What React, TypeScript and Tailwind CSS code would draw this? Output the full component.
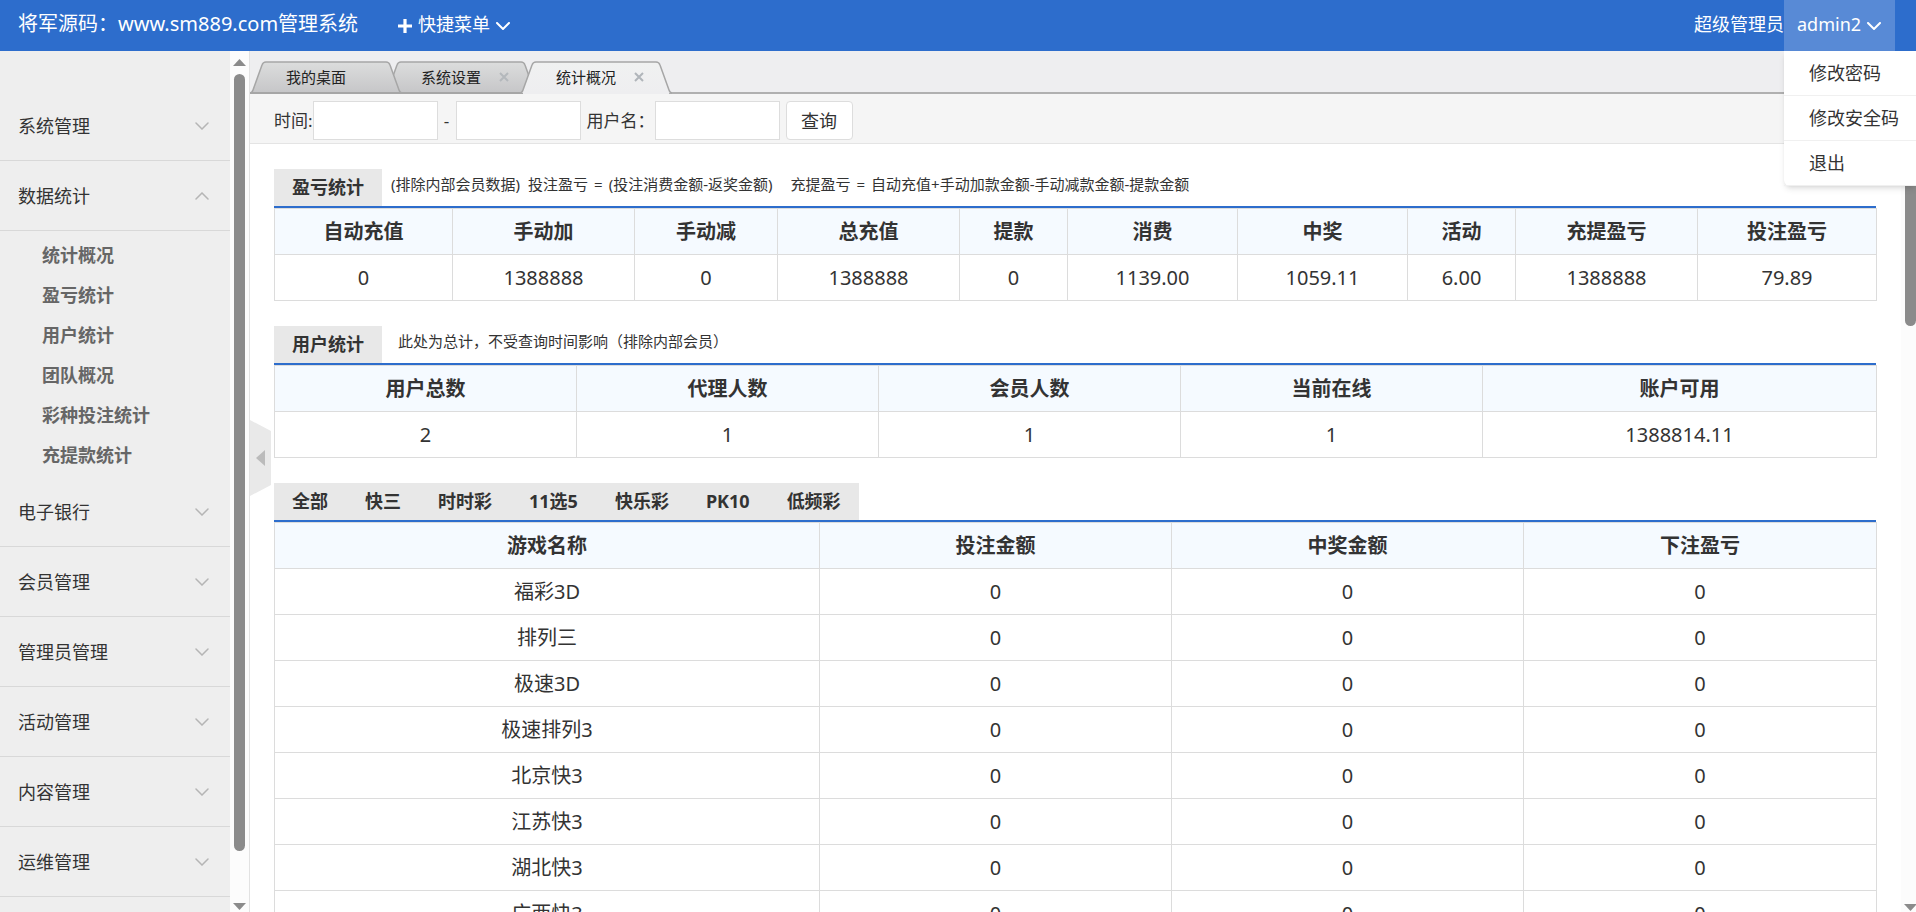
import { useState } from 'react';

const menus = [
  { title: '系统管理', children: [] },
  { title: '数据统计', children: ['统计概况', '盈亏统计', '用户统计', '团队概况', '彩种投注统计', '充提款统计'] },
  { title: '电子银行', children: [] },
  { title: '会员管理', children: [] },
  { title: '管理员管理', children: [] },
  { title: '活动管理', children: [] },
  { title: '内容管理', children: [] },
  { title: '运维管理', children: [] },
];

const tabs = [
  { title: '我的桌面', closable: false, layer: 'z-[1]' },
  { title: '系统设置', closable: true, layer: '' },
  { title: '统计概况', closable: true, layer: 'z-[2]' },
];

const profit = [
  { name: '自动充值', value: '0', width: 'w-[178px]' },
  { name: '手动加', value: '1388888', width: 'w-[182px]' },
  { name: '手动减', value: '0', width: 'w-[143px]' },
  { name: '总充值', value: '1388888', width: 'w-[182px]' },
  { name: '提款', value: '0', width: 'w-[108px]' },
  { name: '消费', value: '1139.00', width: 'w-[170px]' },
  { name: '中奖', value: '1059.11', width: 'w-[170px]' },
  { name: '活动', value: '6.00', width: 'w-[108px]' },
  { name: '充提盈亏', value: '1388888', width: 'w-[182px]' },
  { name: '投注盈亏', value: '79.89', width: 'w-[179px]' },
];

const users = [
  { name: '用户总数', value: '2', width: 'w-[302px]' },
  { name: '代理人数', value: '1', width: 'w-[302px]' },
  { name: '会员人数', value: '1', width: 'w-[302px]' },
  { name: '当前在线', value: '1', width: 'w-[302px]' },
  { name: '账户可用', value: '1388814.11', width: 'w-[394px]' },
];

const gameColumns = [
  { name: '游戏名称', width: 'w-[545px]' },
  { name: '投注金额', width: 'w-[352px]' },
  { name: '中奖金额', width: 'w-[352px]' },
  { name: '下注盈亏', width: 'w-[353px]' },
];

const categories = ['全部', '快三', '时时彩', '11选5', '快乐彩', 'PK10', '低频彩'];
const games = ['福彩3D', '排列三', '极速3D', '极速排列3', '北京快3', '江苏快3', '湖北快3', '广西快3'];

const Chevron = ({ up = false, className = '' }: { up?: boolean; className?: string }) => (
  <svg width="14" height="8" viewBox="0 0 14 8" fill="none" stroke="currentColor" className={className}>
    <path d={up ? 'M1 7l6-6 6 6' : 'M1 1l6 6 6-6'} strokeLinecap="round" />
  </svg>
);

const Arrow = ({ up = false }: { up?: boolean }) => (
  <svg width="13" height="7" viewBox="0 0 13 7" className="shrink-0 fill-[#8b8b8b]">
    <path d={up ? 'M0 7l6.5-7L13 7z' : 'M0 0l6.5 7L13 0z'} />
  </svg>
);

const TabShape = ({ active }: { active: boolean }) => (
  <svg
    width="152"
    height="34"
    viewBox="0 0 152 34"
    fill="none"
    className="absolute left-0 top-0"
  >
    <defs>
      <linearGradient id="tab-on" x1="0" y1="0" x2="0" y2="1">
        <stop offset="0" stopColor="#f0f1f1" />
        <stop offset="1" stopColor="#eeeef0" />
      </linearGradient>
      <linearGradient id="tab-off" x1="0" y1="0" x2="0" y2="1">
        <stop offset="0" stopColor="#dcdddd" />
        <stop offset="1" stopColor="#c6c6c8" />
      </linearGradient>
    </defs>
    <path
      d="M0 32Q2 32 3 29L12 4Q13 1 16 1H136Q139 1 140 4L149 29Q150 32 152 32"
      fill={active ? 'url(#tab-on)' : 'url(#tab-off)'}
      stroke="#a6a6a6"
      strokeWidth="1.5"
    />
    {!active && <path d="M0 32H152" stroke="#a6a6a6" strokeWidth="2" />}
    {active && <path d="M3 32H149" stroke="#eeeef0" strokeWidth="2" />}
  </svg>
);

const SummaryTable = ({ data }: { data: { name: string; value: string; width: string }[] }) => (
  <table className="w-full table-fixed border-collapse text-center text-xl leading-[45px]">
    <thead className="bg-[#f5faff]">
      <tr>
        {data.map((item) => (
          <th key={item.name} className={`border border-[#dcdcdc] p-0 font-bold ${item.width}`}>{item.name}</th>
        ))}
      </tr>
    </thead>
    <tbody>
      <tr>
        {data.map((item) => (
          <td key={item.name} className="border border-[#dcdcdc] p-0">{item.value}</td>
        ))}
      </tr>
    </tbody>
  </table>
);

const Header = () => {
  const [open, setOpen] = useState(true);

  return (
    <header className="relative z-20 flex h-[51px] shrink-0 items-stretch bg-[#2d6dcc] pl-[18px] text-lg text-white">
      <h1 className="flex items-center pb-1 text-xl">将军源码：www.sm889.com管理系统</h1>
      <button className="ml-10 flex items-center gap-1.5 pb-1">
        <svg width="14" height="14" viewBox="0 0 14 14" className="mt-1 fill-white">
          <path d="M5.4 0h3.2v5.4H14v3.2H8.6V14H5.4V8.6H0V5.4h5.4z" />
        </svg>
        快捷菜单
        <Chevron className="mt-1 stroke-2" />
      </button>

      <div className="ml-auto flex items-stretch">
        <span className="flex items-center pb-1">超级管理员</span>
        <div className="relative mr-[21px] flex">
          <button
            onClick={() => setOpen(!open)}
            className="flex w-[111px] items-center gap-1.5 bg-[#588ad6] pb-1 pl-[13px]"
          >
            admin2
            <Chevron className="mt-1 stroke-2" />
          </button>
          {open && (
            <ul className="absolute left-0 top-full w-[132px] rounded-bl-md bg-white text-[#333] shadow-md">
              {['修改密码', '修改安全码', '退出'].map((item) => (
                <li key={item} className="border-b border-[#f0f0f0]">
                  <a href="#" className="block h-11 whitespace-nowrap pl-[25px] leading-[44px]">{item}</a>
                </li>
              ))}
            </ul>
          )}
        </div>
      </div>
    </header>
  );
};

const Sidebar = () => (
  <aside className="flex w-[250px] shrink-0 border-r border-[#e2e2e2]">
    <nav className="flex-1 overflow-hidden bg-[#eee] pt-10 text-lg text-[#333]">
      {menus.map((menu) => (
        <div key={menu.title}>
          <button className="flex h-[70px] w-full items-center justify-between border-b border-[#d8d8d8] pl-[18px] pr-[21px]">
            {menu.title}
            <Chevron up={menu.children.length > 0} className="text-[#b5b5b5] stroke-[1.5]" />
          </button>
          {menu.children.length > 0 && (
            <ul className="pt-1 pb-0.5 font-bold text-[#666]">
              {menu.children.map((child) => (
                <li key={child}>
                  <a href="#" className="block h-10 pl-[42px] leading-10">{child}</a>
                </li>
              ))}
            </ul>
          )}
        </div>
      ))}
    </nav>
    <div className="flex w-[19px] shrink-0 flex-col items-center justify-between bg-[#fcfcfc] pt-2 pb-0.5">
      <Arrow up />
      <div className="mt-2 mb-[52px] w-[11px] flex-1 rounded-full bg-[#8b8b8b]" />
      <Arrow />
    </div>
  </aside>
);

const TabBar = () => (
  <div className="h-[43px] shrink-0 border-b-2 border-[#b0b0b0] bg-[#eeeef0] pt-2.5 text-[15px] text-[#222]">
    <div className="flex">
      {tabs.map((tab, i) => {
        const active = i === tabs.length - 1;
        return (
          <div key={tab.title} className={`relative -mr-[17px] h-[34px] w-[152px] ${tab.layer}`}>
            <TabShape active={active} />
            <div className="relative flex h-8 items-center gap-[18px] pl-9">
              {tab.title}
              {tab.closable && (
                <button aria-label="关闭">
                  <svg width="10" height="10" viewBox="0 0 10 10" stroke={active ? '#b0b5ba' : '#b4b8bc'} strokeWidth="2">
                    <path d="M1 1l8 8M9 1L1 9" />
                  </svg>
                </button>
              )}
            </div>
          </div>
        );
      })}
    </div>
  </div>
);

const Filter = () => (
  <form className="flex h-[50px] shrink-0 items-center border-b border-[#e4e4e4] bg-[#f5f5f5] pt-1 pl-6 text-[17px]">
    <label htmlFor="start">时间:</label>
    <input id="start" className="h-[39px] w-[125px] border border-[#ddd] bg-white px-2" />
    <label htmlFor="end" className="w-[18px] text-center">-</label>
    <input id="end" className="h-[39px] w-[125px] border border-[#ddd] bg-white px-2" />
    <label htmlFor="username" className="ml-1.5">用户名：</label>
    <input id="username" className="h-[39px] w-[125px] border border-[#ddd] bg-white px-2" />
    <button type="button" className="ml-1.5 h-[39px] w-[67px] rounded border border-[#ddd] bg-white text-lg">查询</button>
  </form>
);

export default function App() {
  const [category, setCategory] = useState('全部');

  return (
    <div className="flex h-screen flex-col overflow-hidden bg-white font-['Noto_Sans','Noto_Sans_CJK_SC',sans-serif] text-[#333]">
      <Header />
      <div className="flex min-h-0 flex-1">
        <Sidebar />
        <main className="relative flex min-w-0 flex-1 flex-col">
          <TabBar />
          <button aria-label="收起菜单" className="absolute left-0 top-[369px] z-10">
            <svg width="21" height="76" viewBox="0 0 21 76">
              <path d="M0 0l21 11v54L0 76z" fill="#e9e9e9" />
              <path d="M6 38l9-8v16z" fill="#bbb" />
            </svg>
          </button>
          <div className="flex min-h-0 flex-1">
            <div className="flex min-w-0 flex-1 flex-col">
              <Filter />
              <div className="flex min-h-0 flex-1 flex-col gap-[25px] overflow-hidden pt-[25px] pr-[25px] pl-6">
                <section className="shrink-0">
                  <div className="flex h-[39px] border-b-2 border-[#2d6dcc]">
                    <h2 className="bg-[#e8e8e8] px-[18px] text-lg leading-[37px] font-bold">盈亏统计</h2>
                    <p className="flex gap-1.5 pl-[9px] text-[15px] leading-[30px]">
                      <span className="mr-0.5">(排除内部会员数据)</span>
                      <span>投注盈亏</span>
                      <span>=</span>
                      <span>(投注消费金额-返奖金额)</span>
                      <span className="ml-3">充提盈亏</span>
                      <span>=</span>
                      <span>自动充值+手动加款金额-手动减款金额-提款金额</span>
                    </p>
                  </div>
                  <SummaryTable data={profit} />
                </section>

                <section className="shrink-0">
                  <div className="flex h-[39px] border-b-2 border-[#2d6dcc]">
                    <h2 className="bg-[#e8e8e8] px-[18px] text-lg leading-[37px] font-bold">用户统计</h2>
                    <p className="pl-4 text-[15px] leading-[30px]">此处为总计，不受查询时间影响（排除内部会员）</p>
                  </div>
                  <SummaryTable data={users} />
                </section>

                <section className="shrink-0">
                  <div className="flex h-[39px] border-b-2 border-[#2d6dcc]">
                    <div className="flex gap-px bg-[#e8e8e8]">
                      {categories.map((item) => (
                        <button
                          key={item}
                          aria-pressed={category === item}
                          onClick={() => setCategory(item)}
                          className="px-[18px] text-lg leading-[37px] font-bold"
                        >
                          {item}
                        </button>
                      ))}
                    </div>
                  </div>
                  <table className="w-full table-fixed border-collapse text-center text-xl leading-[45px]">
                    <thead className="bg-[#f5faff]">
                      <tr>
                        {gameColumns.map((col) => (
                          <th key={col.name} className={`border border-[#dcdcdc] p-0 font-bold ${col.width}`}>{col.name}</th>
                        ))}
                      </tr>
                    </thead>
                    <tbody>
                      {games.map((game) => (
                        <tr key={game}>
                          <td className="border border-[#dcdcdc] p-0">{game}</td>
                          <td className="border border-[#dcdcdc] p-0">0</td>
                          <td className="border border-[#dcdcdc] p-0">0</td>
                          <td className="border border-[#dcdcdc] p-0">0</td>
                        </tr>
                      ))}
                    </tbody>
                  </table>
                </section>
              </div>
            </div>
            {/* page scrollbar */}
            <div className="flex w-[15px] shrink-0 flex-col items-center overflow-hidden bg-[#fcfcfc] pt-2 pb-px pl-1">
              <Arrow up />
              <div className="mt-2 h-[209px] w-[11px] rounded-full bg-[#8b8b8b]" />
              <div className="mt-auto flex">
                <Arrow />
              </div>
            </div>
          </div>
        </main>
      </div>
    </div>
  );
}
